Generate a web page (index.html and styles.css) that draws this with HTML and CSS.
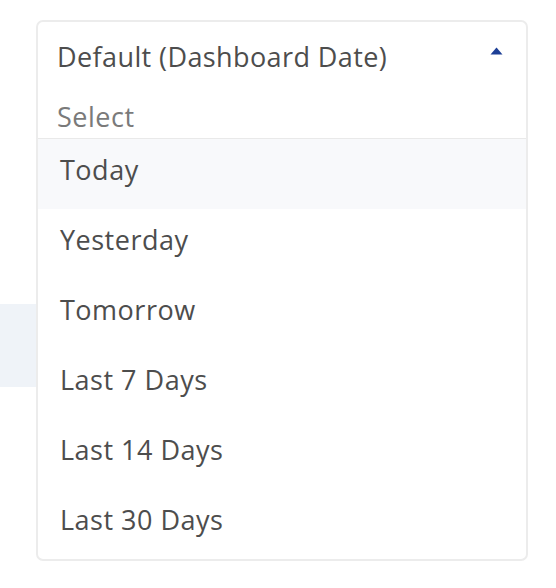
FILE: index.html
```html
<!DOCTYPE html>
<html lang="en">
<head>
    <meta charset="UTF-8">
    <meta name="viewport" content="width=device-width, initial-scale=1.0">
    <title>Date Range</title>
    <link rel="stylesheet" href="styles.css">
</head>
<body>
    <div class="page">
        <div class="filter-band"></div>
    </div>

    <div class="dropdown">
        <div class="dropdown-head">
            <span class="dropdown-value">Default (Dashboard Date)</span>
            <svg class="caret" width="13" height="8" viewBox="0 0 13 8">
                <path d="M6.5 0.5 L12.5 7.5 L0.5 7.5 Z" fill="#1d3f96"/>
            </svg>
        </div>
        <div class="dropdown-label">Select</div>
        <ul class="options">
            <li class="option active">Today</li>
            <li class="option">Yesterday</li>
            <li class="option">Tomorrow</li>
            <li class="option">Last 7 Days</li>
            <li class="option">Last 14 Days</li>
            <li class="option">Last 30 Days</li>
        </ul>
    </div>
</body>
</html>
```

FILE: styles.css
```css
body {
    margin: 0;
    font-family: 'Open Sans', 'Noto Sans', sans-serif;
    background-color: #fff;
    color: #4d4d4d;
    letter-spacing: 0.5px;
}

.page {
    padding-top: 304px;
}

.filter-band {
    height: 83px;
    width: 120px;
    background-color: #eff3f8;
}

/* open menu floats over the page */
.dropdown {
    position: absolute;
    top: 20px;
    left: 36px;
    width: 488px;
    background-color: #fff;
    border: 2px solid #ececec;
    border-radius: 7px;
    overflow: hidden;
}

.dropdown-head {
    display: flex;
    align-items: center;
    justify-content: space-between;
    padding: 20px 23px 0 19px;
    font-size: 27px;
    line-height: 30px;
    letter-spacing: 0.4px;
}

.caret {
    display: block;
    margin-top: -13px;
}

.dropdown-label {
    padding: 30px 19px 6px;
    font-size: 27px;
    line-height: 30px;
    color: #7a7a7a;
    border-bottom: 1px solid #e9e9e9;
}

.options {
    list-style: none;
    margin: 0;
    padding: 0;
}

.option {
    height: 70px;
    display: flex;
    align-items: center;
    padding: 0 0 9px 22px;
    box-sizing: border-box;
    font-size: 27px;
}

.option.active {
    background-color: #f8f9fb;
}
```
